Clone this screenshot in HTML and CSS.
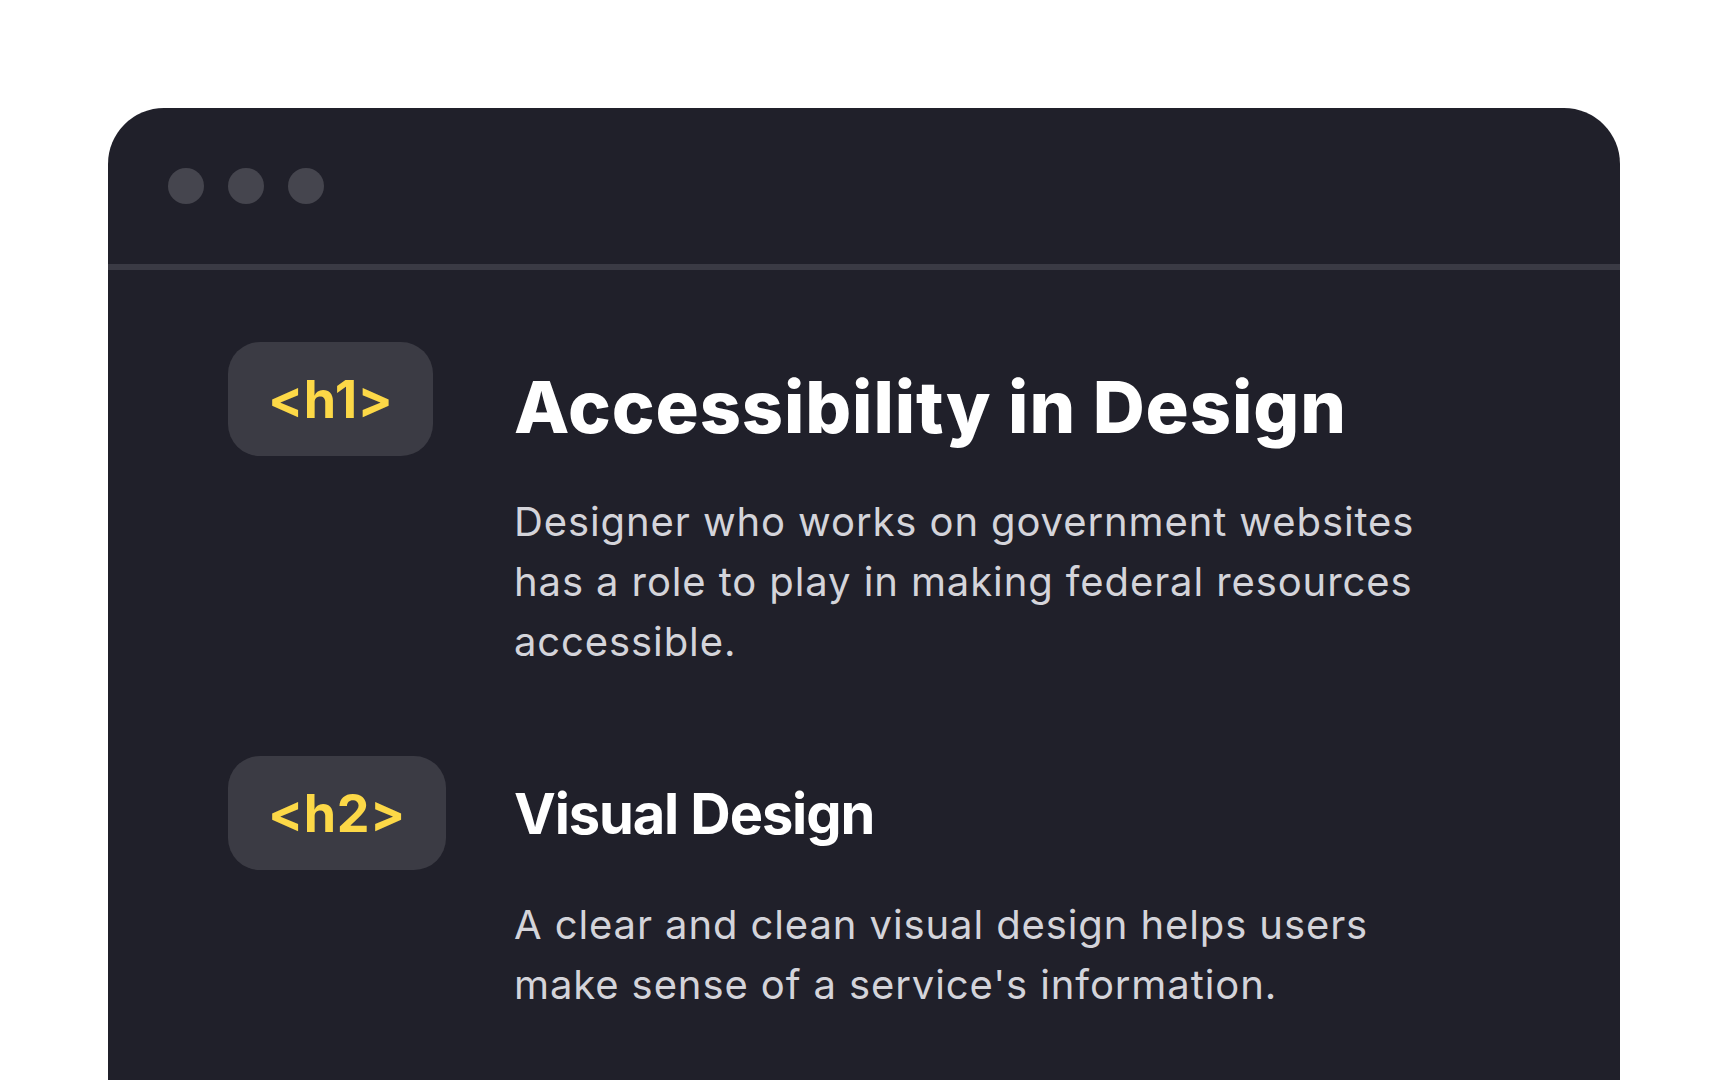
FILE: index.html
```html
<!DOCTYPE html>
<html lang="en">
<head>
    <meta charset="UTF-8">
    <meta name="viewport" content="width=device-width, initial-scale=1.0">
    <title>Accessibility in Design</title>
    <link rel="stylesheet" href="styles.css">
</head>
<body>

<div class="window">
    <div class="window-bar">
        <span class="dot"></span>
        <span class="dot"></span>
        <span class="dot"></span>
    </div>

    <div class="window-body">
        <div class="block">
            <div class="tag">&lt;h1&gt;</div>
            <div class="block-text">
                <h1>Accessibility in Design</h1>
                <p>Designer who works on government websites has a role to play in making federal resources accessible.</p>
            </div>
        </div>

        <div class="block">
            <div class="tag">&lt;h2&gt;</div>
            <div class="block-text">
                <h2>Visual Design</h2>
                <p>A clear and clean visual design helps users make sense of a service's information.</p>
            </div>
        </div>
    </div>
</div>

</body>
</html>
```

FILE: styles.css
```css
html, body {
    height: 100%;
    overflow: hidden;
}

body {
    font-family: 'Inter', 'Noto Sans', sans-serif;
    margin: 0;
    padding: 108px 108px 0;
    background-color: #fff;
}

.window {
    background-color: #20202a;
    border-radius: 56px 56px 0 0;
    padding-bottom: 160px;
}

.window-bar {
    display: flex;
    align-items: center;
    gap: 24px;
    height: 156px;
    padding: 0 60px;
    border-bottom: 6px solid #3a3a44;
}

.dot {
    width: 36px;
    height: 36px;
    border-radius: 50%;
    background-color: #45454e;
}

.window-body {
    padding: 72px 120px 0;
}

.block {
    display: grid;
    grid-template-columns: 286px 1fr;
    margin-bottom: 84px;
}

.tag {
    justify-self: start;
    display: flex;
    align-items: center;
    height: 114px;
    padding: 0 40px;
    border-radius: 32px;
    background-color: #3b3b44;
    color: #fcd847;
    font-size: 52px;
    font-weight: 700;
    letter-spacing: 0.01em;
}

.block-text {
    max-width: 930px;
}

h1, h2 {
    margin: 0;
    color: #fff;
    font-weight: 700;
    line-height: 1.2;
}

h1 {
    margin-top: 22px;
    font-size: 72px;
    font-weight: 800;
    letter-spacing: 0.9px;
}

h2 {
    margin-top: 25px;
    font-size: 56px;
    letter-spacing: -0.02em;
}

p {
    margin: 42px 0 0;
    color: #d4d4da;
    font-size: 40px;
    line-height: 60px;
    letter-spacing: 0.9px;
}

h2 + p {
    margin-top: 46px;
}
```
